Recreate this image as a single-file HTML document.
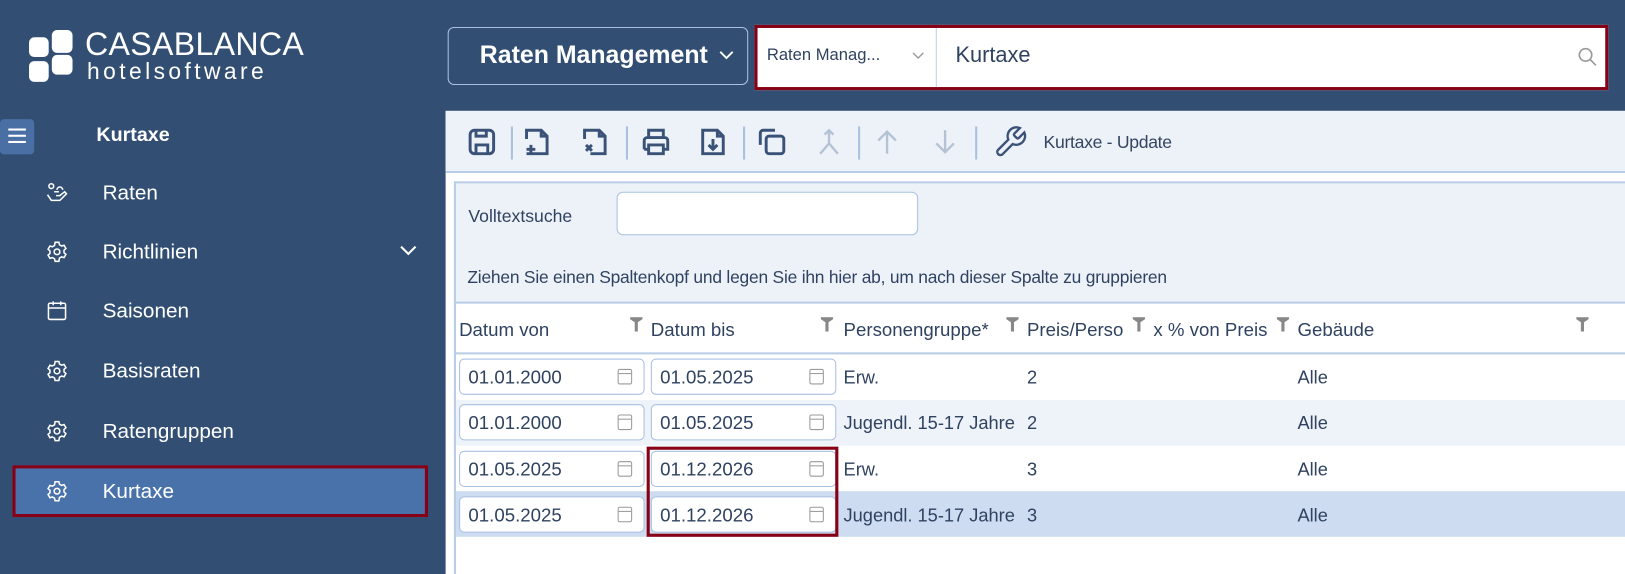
<!DOCTYPE html>
<html><head><meta charset="utf-8"><style>
*{box-sizing:border-box;margin:0;padding:0}
html,body{width:1625px;height:554px;overflow:hidden;background:#324f73}
#w{position:absolute;left:0;top:0;width:1568px;height:535px;transform:scale(1.0363);transform-origin:0 0;font-family:"Liberation Sans",sans-serif}
.a{position:absolute}
.side{color:#fff;font-size:20px}
.mi{position:absolute;left:99px;transform:translateY(-50%)}
.ic{position:absolute;left:44px;width:22px;height:22px;transform:translateY(-50%)}
.tb svg{position:absolute;top:120px;width:34px;height:34px}
.sep{position:absolute;top:122px;width:2px;height:32px;background:#a9c0e0}
.hdr{position:absolute;top:308px;font-size:18px;color:#2f4260}
.flt{position:absolute;top:306px;width:12px;height:14px}
.di{position:absolute;height:35px;width:179px;background:#fff;border:1px solid #a9c0e0;border-radius:5px;font-size:18px;color:#2f4260;padding:7px 0 0 8px}
.di i{position:absolute;right:11px;top:9px;width:14px;height:15px;border:1.5px solid #999;border-radius:2px}
.di i:before{content:"";position:absolute;left:0;right:0;top:3px;border-top:1.5px solid #999}
.td{position:absolute;font-size:17.6px;color:#2f4260}
</style></head><body><div id="w">
<div class="a" style="left:28px;top:36px;width:19px;height:19px;background:#fff;border-radius:5px"></div>
<div class="a" style="left:50px;top:29px;width:20px;height:22px;background:#fff;border-radius:5px"></div>
<div class="a" style="left:28px;top:59px;width:19px;height:20px;background:#fff;border-radius:5px"></div>
<div class="a" style="left:50px;top:53px;width:20px;height:19px;background:#fff;border-radius:5px"></div>
<div class="a" style="left:82px;top:25px;color:#fff;font-size:31px;letter-spacing:0.3px">CASABLANCA</div>
<div class="a" style="left:84px;top:56px;color:#fff;font-size:22px;letter-spacing:3.3px">hotelsoftware</div>
<div class="a" style="left:0;top:115px;width:33px;height:34px;background:#4a6fa5;border-radius:4px"></div>
<div class="a" style="left:8px;top:124px;width:17px;height:2px;background:#fff;box-shadow:0 6px #fff,0 12px #fff"></div>
<div class="a side" style="left:93px;top:120px;font-weight:bold;font-size:19px">Kurtaxe</div>
<div class="a" style="left:12px;top:449px;width:401px;height:50px;background:#4a72aa;border:3px solid #870016"></div>
<div class="side">
<svg class="ic" style="top:186px" viewBox="0 0 24 24" fill="none" stroke="#fff" stroke-width="1.6"><circle cx="6" cy="5" r="2.5"/><path d="M2 14l4 6h9l7-7-2-2-5 4h-4M14 11l-5 0M12 9a3 3 0 1 1 6 0"/></svg>
<span class="mi" style="top:187px">Raten</span>
<svg class="ic" style="top:243px" viewBox="0 0 24 24" fill="none" stroke="#fff" stroke-width="1.6"><circle cx="12" cy="12" r="3"/><path d="M10 2h4l.6 2.6 2.3 1.3 2.5-.8 2 3.4-2 1.8v2.6l2 1.8-2 3.4-2.5-.8-2.3 1.3L14 22h-4l-.6-2.6-2.3-1.3-2.5.8-2-3.4 2-1.8v-2.6l-2-1.8 2-3.4 2.5.8 2.3-1.3z"/></svg>
<span class="mi" style="top:244px">Richtlinien</span>
<svg class="a" style="left:385px;top:236px" width="18" height="12" viewBox="0 0 18 12" fill="none" stroke="#fff" stroke-width="2"><path d="M2 2l7 7 7-7"/></svg>
<svg class="ic" style="top:300px" viewBox="0 0 24 24" fill="none" stroke="#fff" stroke-width="1.6"><rect x="3" y="4" width="18" height="17" rx="1.5"/><path d="M3 9h18M8 2v4M16 2v4"/></svg>
<span class="mi" style="top:301px">Saisonen</span>
<svg class="ic" style="top:358px" viewBox="0 0 24 24" fill="none" stroke="#fff" stroke-width="1.6"><circle cx="12" cy="12" r="3"/><path d="M10 2h4l.6 2.6 2.3 1.3 2.5-.8 2 3.4-2 1.8v2.6l2 1.8-2 3.4-2.5-.8-2.3 1.3L14 22h-4l-.6-2.6-2.3-1.3-2.5.8-2-3.4 2-1.8v-2.6l-2-1.8 2-3.4 2.5.8 2.3-1.3z"/></svg>
<span class="mi" style="top:359px">Basisraten</span>
<svg class="ic" style="top:416px" viewBox="0 0 24 24" fill="none" stroke="#fff" stroke-width="1.6"><circle cx="12" cy="12" r="3"/><path d="M10 2h4l.6 2.6 2.3 1.3 2.5-.8 2 3.4-2 1.8v2.6l2 1.8-2 3.4-2.5-.8-2.3 1.3L14 22h-4l-.6-2.6-2.3-1.3-2.5.8-2-3.4 2-1.8v-2.6l-2-1.8 2-3.4 2.5.8 2.3-1.3z"/></svg>
<span class="mi" style="top:417px">Ratengruppen</span>
<svg class="ic" style="top:474px" viewBox="0 0 24 24" fill="none" stroke="#fff" stroke-width="1.6"><circle cx="12" cy="12" r="3"/><path d="M10 2h4l.6 2.6 2.3 1.3 2.5-.8 2 3.4-2 1.8v2.6l2 1.8-2 3.4-2.5-.8-2.3 1.3L14 22h-4l-.6-2.6-2.3-1.3-2.5.8-2-3.4 2-1.8v-2.6l-2-1.8 2-3.4 2.5.8 2.3-1.3z"/></svg>
<span class="mi" style="top:475px">Kurtaxe</span>
</div>
<div class="a" style="left:432px;top:26px;width:290px;height:56px;border:1.5px solid #a9c0e0;border-radius:6px"></div>
<div class="a" style="left:463px;top:40px;color:#fff;font-size:24px;font-weight:bold">Raten Management</div>
<svg class="a" style="left:694px;top:48px" width="14" height="10" viewBox="0 0 14 10" fill="none" stroke="#fff" stroke-width="1.8"><path d="M1 2l6 6 6-6"/></svg>
<div class="a" style="left:728px;top:24px;width:824px;height:63px;border:3px solid #870016;background:#fff"></div>
<div class="a" style="left:903px;top:27px;width:1px;height:57px;background:#c0cfe2"></div>
<div class="a" style="left:740px;top:45px;font-size:16px;color:#2f4260">Raten Manag...</div>
<svg class="a" style="left:880px;top:50px" width="12" height="8" viewBox="0 0 12 8" fill="none" stroke="#999" stroke-width="1.3"><path d="M1 1l5 5 5-5"/></svg>
<div class="a" style="left:922px;top:42px;font-size:21px;color:#2f4260">Kurtaxe</div>
<svg class="a" style="left:1522px;top:45px" width="20" height="20" viewBox="0 0 20 20" fill="none" stroke="#999" stroke-width="1.6"><circle cx="8" cy="8" r="6"/><path d="M12.5 12.5l5.5 5.5"/></svg>
<div class="a" style="left:430px;top:107px;width:1195px;height:447px;background:#fff"></div>
<div class="a" style="left:430px;top:107px;width:1195px;height:60px;background:#edf2f9;border-bottom:2px solid #b9cde6"></div>
<div class="tb">
<svg style="left:448px" viewBox="0 0 24 24" fill="none" stroke="#3b5278" stroke-width="2"><rect x="4" y="4" width="16" height="16" rx="3"/><path d="M8 4v4h7V4M8 20v-6h8v6"/></svg>
<div class="sep" style="left:493px"></div>
<svg style="left:501px" viewBox="0 0 24 24" fill="none" stroke="#3b5278" stroke-width="2"><path d="M5 10V4h10l4 4v12H5M15 4v4h4M8 14v6M5 17h6"/></svg>
<svg style="left:557px" viewBox="0 0 24 24" fill="none" stroke="#3b5278" stroke-width="2"><path d="M5 10V4h10l4 4v12h-10M15 4v4h4M6 14l4 4M10 14l-4 4"/></svg>
<div class="sep" style="left:604px"></div>
<svg style="left:616px" viewBox="0 0 24 24" fill="none" stroke="#3b5278" stroke-width="2"><path d="M7 9V4h10v5M4 17V11a2 2 0 0 1 2-2h12a2 2 0 0 1 2 2v6h-3M7 17H4M7 14h10v6H7z"/></svg>
<svg style="left:671px" viewBox="0 0 24 24" fill="none" stroke="#3b5278" stroke-width="2"><path d="M5 4h10l4 4v12H5zM15 4v4h4M12 10v7M9 14l3 3 3-3"/></svg>
<div class="sep" style="left:717px"></div>
<svg style="left:728px" viewBox="0 0 24 24" fill="none" stroke="#3b5278" stroke-width="2"><rect x="8" y="8" width="12" height="12" rx="2"/><path d="M4 14V6a2 2 0 0 1 2-2h8"/></svg>
<svg style="left:783px" viewBox="0 0 24 24" fill="none" stroke="#b4c2d4" stroke-width="1.6"><path d="M12 4v9L6 20M12 13l6 7M9 7l3-3 3 3"/></svg>
<div class="sep" style="left:828px"></div>
<svg style="left:839px" viewBox="0 0 24 24" fill="none" stroke="#b4c2d4" stroke-width="1.6"><path d="M12 20V5M6 11l6-6 6 6"/></svg>
<svg style="left:895px" viewBox="0 0 24 24" fill="none" stroke="#b4c2d4" stroke-width="1.6"><path d="M12 4v15M6 13l6 6 6-6"/></svg>
<div class="sep" style="left:941px"></div>
<svg style="left:958px" viewBox="0 0 24 24" fill="none" stroke="#3b5278" stroke-width="1.6"><path d="M14.7 6.3a1 1 0 0 0 0 1.4l1.6 1.6a1 1 0 0 0 1.4 0l3.8-3.8a6 6 0 0 1-7.9 7.9l-6.9 6.9a2.1 2.1 0 0 1-3-3l6.9-6.9a6 6 0 0 1 7.9-7.9z"/></svg>
</div>
<div class="a" style="left:1007px;top:128px;font-size:17px;color:#334560;letter-spacing:-0.3px">Kurtaxe - Update</div>
<div class="a" style="left:438px;top:175px;width:1187px;height:379px;border-left:2px solid #b9cde6;border-top:2px solid #b9cde6;background:#fff"></div>
<div class="a" style="left:440px;top:177px;width:1185px;height:116px;background:#edf2f9;border-bottom:2px solid #b9cde6"></div>
<div class="a" style="left:452px;top:199px;font-size:17px;color:#2f4260">Volltextsuche</div>
<div class="a" style="left:595px;top:185px;width:291px;height:42px;background:#fff;border:1px solid #a9c0e0;border-radius:6px"></div>
<div class="a" style="left:451px;top:258px;font-size:16.8px;color:#2f4260;letter-spacing:-0.2px">Ziehen Sie einen Spaltenkopf und legen Sie ihn hier ab, um nach dieser Spalte zu gruppieren</div>
<div class="a" style="left:440px;top:340px;width:1185px;height:2px;background:#b9cde6"></div>
<div class="hdr" style="left:443px">Datum von</div>
<div class="hdr" style="left:628px">Datum bis</div>
<div class="hdr" style="left:814px">Personengruppe*</div>
<div class="hdr" style="left:991px">Preis/Perso</div>
<div class="hdr" style="left:1113px">x % von Preis</div>
<div class="hdr" style="left:1252px">Gebäude</div>
<svg class="flt" style="left:608px" viewBox="0 0 12 14"><path d="M0 0h12v2L7.5 5v9h-3V5L0 2z" fill="#888"/></svg>
<svg class="flt" style="left:792px" viewBox="0 0 12 14"><path d="M0 0h12v2L7.5 5v9h-3V5L0 2z" fill="#888"/></svg>
<svg class="flt" style="left:971px" viewBox="0 0 12 14"><path d="M0 0h12v2L7.5 5v9h-3V5L0 2z" fill="#888"/></svg>
<svg class="flt" style="left:1093px" viewBox="0 0 12 14"><path d="M0 0h12v2L7.5 5v9h-3V5L0 2z" fill="#888"/></svg>
<svg class="flt" style="left:1232px" viewBox="0 0 12 14"><path d="M0 0h12v2L7.5 5v9h-3V5L0 2z" fill="#888"/></svg>
<svg class="flt" style="left:1521px" viewBox="0 0 12 14"><path d="M0 0h12v2L7.5 5v9h-3V5L0 2z" fill="#888"/></svg>
<div class="a" style="left:440px;top:386px;width:1185px;height:44px;background:#eef2f9"></div>
<div class="a" style="left:440px;top:474px;width:1185px;height:44px;background:#cddcf0"></div>
<div class="di" style="left:443px;top:346px">01.01.2000<i></i></div>
<div class="di" style="left:628px;top:346px">01.05.2025<i></i></div>
<div class="td" style="left:814px;top:354px">Erw.</div><div class="td" style="left:991px;top:354px">2</div><div class="td" style="left:1252px;top:354px">Alle</div>
<div class="di" style="left:443px;top:390px">01.01.2000<i></i></div>
<div class="di" style="left:628px;top:390px">01.05.2025<i></i></div>
<div class="td" style="left:814px;top:398px">Jugendl. 15-17 Jahre</div><div class="td" style="left:991px;top:398px">2</div><div class="td" style="left:1252px;top:398px">Alle</div>
<div class="di" style="left:443px;top:435px">01.05.2025<i></i></div>
<div class="di" style="left:628px;top:435px">01.12.2026<i></i></div>
<div class="td" style="left:814px;top:443px">Erw.</div><div class="td" style="left:991px;top:443px">3</div><div class="td" style="left:1252px;top:443px">Alle</div>
<div class="di" style="left:443px;top:479px">01.05.2025<i></i></div>
<div class="di" style="left:628px;top:479px">01.12.2026<i></i></div>
<div class="td" style="left:814px;top:487px">Jugendl. 15-17 Jahre</div><div class="td" style="left:991px;top:487px">3</div><div class="td" style="left:1252px;top:487px">Alle</div>
<div class="a" style="left:624px;top:431px;width:185px;height:87px;border:3px solid #870016"></div>
</div></body></html>
